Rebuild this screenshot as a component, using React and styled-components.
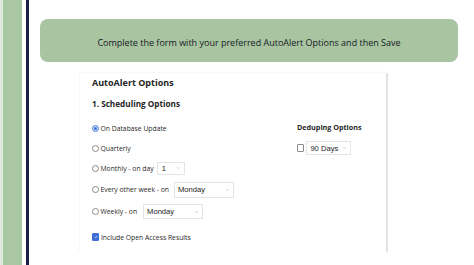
import React from 'react';
import styled, { createGlobalStyle } from 'styled-components';

const GlobalStyle = createGlobalStyle`
  html, body {
    margin: 0;
    padding: 0;
    background: #ffffff;
  }
  body {
    font-family: "Open Sans", "Noto Sans", sans-serif;
    color: #222;
  }
`;

const Page = styled.div`
  display: flex;
  height: 265px;
  width: 474px;
  overflow: hidden;
`;

const Rail = styled.div`
  width: 19px;
  flex: none;
  background: #a9c7a3;
  border-left: 3px solid #dde9da;
  margin-right: 4px;
`;

const NavyLine = styled.div`
  width: 3px;
  flex: none;
  background: #1d1c4b;
`;

const Content = styled.div`
  flex: 1;
  padding: 19px 16px 0 11px;
`;

const Banner = styled.div`
  height: 43px;
  border-radius: 8px;
  background: #a8c4a0;
  display: flex;
  align-items: center;
  justify-content: center;
  padding-top: 4px;
  box-sizing: border-box;
  font-size: 9px;
  color: #161a26;
`;

const Card = styled.div`
  width: 308px;
  margin: 11px 0 0 40px;
  padding: 0 12px 5px;
  box-sizing: border-box;
  background: #fff;
  border-right: 2px solid #e3e3e3;
  box-shadow: -1px -1px 2px rgba(0, 0, 0, 0.04);
`;

const Title = styled.h2`
  margin: 0;
  font-size: 9px;
  font-weight: 700;
  line-height: 20px;
  color: #262626;
`;

const Subtitle = styled.h3`
  margin: 1px 0 0;
  font-size: 8.2px;
  font-weight: 700;
  line-height: 20px;
  color: #262626;
`;

const Body = styled.div`
  display: grid;
  grid-template-columns: 205px 1fr;
  margin-top: 4px;
`;

const Column = styled.div`
  display: flex;
  flex-direction: column;
`;

const Row = styled.div`
  display: flex;
  align-items: center;
  height: ${p => p.$h || 20}px;
  margin-top: ${p => p.$mt || 0}px;
  font-size: 6.8px;
  color: #2a2a2a;
`;

const Radio = styled.span`
  width: 5px;
  height: 5px;
  flex: none;
  border-radius: 50%;
  border: 0.8px solid ${p => (p.$on ? '#6d95e0' : '#8a8a8a')};
  background: ${p => (p.$on ? '#3f6fd6' : '#fff')};
  box-shadow: ${p => (p.$on ? 'inset 0 0 0 1px #dfe9fb' : 'none')};
  margin-right: 1.5px;
`;

const Check = styled.span`
  width: 5.4px;
  height: 5.4px;
  flex: none;
  border-radius: 1px;
  border: 0.8px solid ${p => (p.$on ? '#3f6fd6' : '#8a8a8a')};
  background: ${p => (p.$on ? '#3f6fd6' : '#fff')};
  display: flex;
  align-items: center;
  justify-content: center;
  margin-right: ${p => p.$gap || 1.5}px;
`;

const Select = styled.div`
  display: flex;
  align-items: center;
  justify-content: space-between;
  width: ${p => p.$w}px;
  height: ${p => p.$h || 15}px;
  margin-left: ${p => p.$ml ?? 5}px;
  padding: 0 4px 0 ${p => p.$pl || 3}px;
  box-sizing: border-box;
  border: 1px solid #e4e4e4;
  background: #fff;
  font-family: "Liberation Sans", Arial, sans-serif;
  font-size: 7.6px;
  color: #222;
`;

const Heading = styled.div`
  font-size: 7.2px;
  font-weight: 700;
  line-height: 18px;
  color: #262626;
`;

const Chevron = () => (
  <svg width="3" height="2" viewBox="0 0 6 4">
    <path d="M1 1l2 2 2-2" fill="none" stroke="#9a9a9a" strokeWidth="1.2" />
  </svg>
);

const Tick = () => (
  <svg width="4" height="4" viewBox="0 0 10 10">
    <path d="M2 5.2l2 2L8 2.8" fill="none" stroke="#fff" strokeWidth="1.8" />
  </svg>
);

const Dropdown = ({ value, ...rest }) => (
  <Select {...rest}>
    <span>{value}</span>
    <Chevron />
  </Select>
);

export default function App() {
  return (
    <>
      <GlobalStyle />
      <Page>
        <Rail />
        <NavyLine />
        <Content>
          <Banner>Complete the form with your preferred AutoAlert Options and then Save</Banner>
          <Card>
            <Title>AutoAlert Options</Title>
            <Subtitle>1. Scheduling Options</Subtitle>
            <Body>
              <Column>
                <Row>
                  <Radio $on />
                  On Database Update
                </Row>
                <Row>
                  <Radio />
                  Quarterly
                </Row>
                <Row>
                  <Radio />
                  Monthly - on day
                  <Dropdown value="1" $w={28} $h={13} $pl={4} $ml={3} />
                </Row>
                <Row $h={23}>
                  <Radio />
                  Every other week - on
                  <Dropdown value="Monday" $w={60} $h={16} />
                </Row>
                <Row $h={21}>
                  <Radio />
                  Weekly - on
                  <Dropdown value="Monday" $w={60} $h={15} $ml={6} />
                </Row>
                <Row $mt={5}>
                  <Check $on>
                    <Tick />
                  </Check>
                  Include Open Access Results
                </Row>
              </Column>
              <Column>
                <Heading>Deduping Options</Heading>
                <Row $mt={2}>
                  <Check $gap={2} />
                  <Dropdown value="90 Days" $w={45} $h={14} $ml={0} />
                </Row>
              </Column>
            </Body>
          </Card>
        </Content>
      </Page>
    </>
  );
}
